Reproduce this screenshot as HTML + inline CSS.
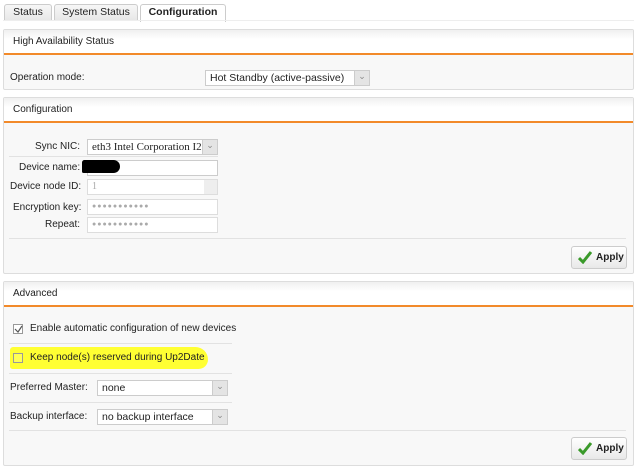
<!DOCTYPE html>
<html><head><style>
*{box-sizing:border-box;margin:0;padding:0}
body{width:640px;height:469px;background:#fff;font-family:"Liberation Sans",Arial,sans-serif;font-size:10px;color:#222;position:relative;overflow:hidden}
.a{position:absolute}
.tab{position:absolute;top:4px;height:17px;border:1px solid #ccc;border-bottom:none;border-radius:3px 3px 0 0;background:linear-gradient(#f7f7f7,#e6e6e6);text-align:center;line-height:15px;font-size:10.5px}
.panel{position:absolute;left:3px;width:631px;border:1px solid #ddd;background:#f8f8f8;border-radius:2px}
.hd{height:25px;background:linear-gradient(#f0f0f0,#fff 40%);border-bottom:2px solid #f28a2a;padding-left:9px;line-height:24px;font-size:10px}
.sel{position:absolute;height:16px;border:1px solid #ccc;background:#fff;line-height:14px;padding-left:4px;font-size:10.5px}
.sel::after{content:"⌄";position:absolute;right:0;top:0;width:14px;height:14px;background:#e4e4e4;border-left:1px solid #ccc;color:#888;font-size:9px;text-align:center;line-height:10px}
.inp{position:absolute;height:16px;border:1px solid #ddd;background:#fff;color:#aaa;font-size:7px;line-height:14px;padding-left:4px;letter-spacing:1px}
.ln{position:absolute;height:1px;background:#e2e2e2}
.btn{position:absolute;width:56px;height:23px;border:1px solid #ccc;border-radius:3px;background:linear-gradient(#fff,#e8e8e8);font-weight:bold;font-size:10px;line-height:21px;padding-left:24px}
.btn svg{position:absolute;left:6px;top:4px}
.lbl{position:absolute;font-size:10px}
</style></head><body>
<div class="tab" style="left:4px;width:48px">Status</div>
<div class="tab" style="left:54px;width:84px">System Status</div>
<div class="tab" style="left:140px;width:86px;background:#fff;font-weight:bold;height:18px">Configuration</div>
<div class="ln" style="left:3px;top:20px;width:631px;background:#eee"></div>

<div class="panel" style="top:29px;height:61px"><div class="hd">High Availability Status</div></div>
<div class="lbl" style="left:10px;top:72px">Operation mode:</div>
<div class="sel" style="left:205px;top:70px;width:165px">Hot Standby (active-passive)</div>

<div class="panel" style="top:97px;height:177px"><div class="hd">Configuration</div></div>
<div class="lbl" style="left:35px;top:141px">Sync NIC:</div>
<div class="sel" style="left:87px;top:139px;width:131px;overflow:hidden;white-space:nowrap;font-family:'Liberation Serif',serif;font-size:11px">eth3 Intel Corporation I21</div>
<div class="ln" style="left:9px;top:156px;width:209px"></div>
<div class="lbl" style="left:19px;top:162px">Device name:</div>
<div class="inp" style="left:87px;top:160px;width:131px;border-color:#ccc"></div>
<div class="a" style="left:82px;top:160px;width:38px;height:13px;background:#000;border-radius:3px 8px 8px 2px"></div>
<div class="lbl" style="left:10px;top:181px">Device node ID:</div>
<div class="inp" style="left:87px;top:179px;width:131px;font-size:10px;letter-spacing:0;font-family:'Liberation Serif',serif">1</div>
<div class="a" style="left:204px;top:180px;width:13px;height:14px;background:#eee"></div>
<div class="lbl" style="left:13px;top:202px">Encryption key:</div>
<div class="inp" style="left:87px;top:199px;width:131px">●●●●●●●●●●●</div>
<div class="lbl" style="left:45px;top:219px">Repeat:</div>
<div class="inp" style="left:87px;top:217px;width:131px">●●●●●●●●●●●</div>
<div class="ln" style="left:9px;top:238px;width:617px"></div>
<div class="btn" style="left:571px;top:246px"><svg width="14" height="13"><path d="M1 7 L5 11 L13 1" stroke="#3a9a2a" stroke-width="3" fill="none"/></svg>Apply</div>

<div class="panel" style="top:281px;height:185px"><div class="hd">Advanced</div></div>
<div class="a" style="left:13px;top:324px;width:10px;height:10px;border:1px solid #999;background:#fff"></div>
<svg class="a" style="left:14px;top:325px" width="9" height="9"><path d="M1 4 L4 7 L8 1" stroke="#555" stroke-width="1.2" fill="none"/></svg>
<div class="lbl" style="left:30px;top:323px">Enable automatic configuration of new devices</div>
<div class="ln" style="left:9px;top:343px;width:223px"></div>
<div class="a" style="left:10px;top:347px;width:198px;height:22px;background:#ffff33;border-radius:10px 40px 30px 8px"></div>
<div class="a" style="left:13px;top:353px;width:10px;height:10px;border:1px solid #999;background:#ffff55"></div>
<div class="lbl" style="left:30px;top:352px">Keep node(s) reserved during Up2Date</div>
<div class="ln" style="left:9px;top:373px;width:223px"></div>
<div class="lbl" style="left:10px;top:382px">Preferred Master:</div>
<div class="sel" style="left:97px;top:380px;width:131px">none</div>
<div class="ln" style="left:9px;top:402px;width:223px"></div>
<div class="lbl" style="left:10px;top:411px">Backup interface:</div>
<div class="sel" style="left:97px;top:409px;width:131px">no backup interface</div>
<div class="ln" style="left:9px;top:430px;width:617px"></div>
<div class="btn" style="left:571px;top:437px"><svg width="14" height="13"><path d="M1 7 L5 11 L13 1" stroke="#3a9a2a" stroke-width="3" fill="none"/></svg>Apply</div>
</body></html>
